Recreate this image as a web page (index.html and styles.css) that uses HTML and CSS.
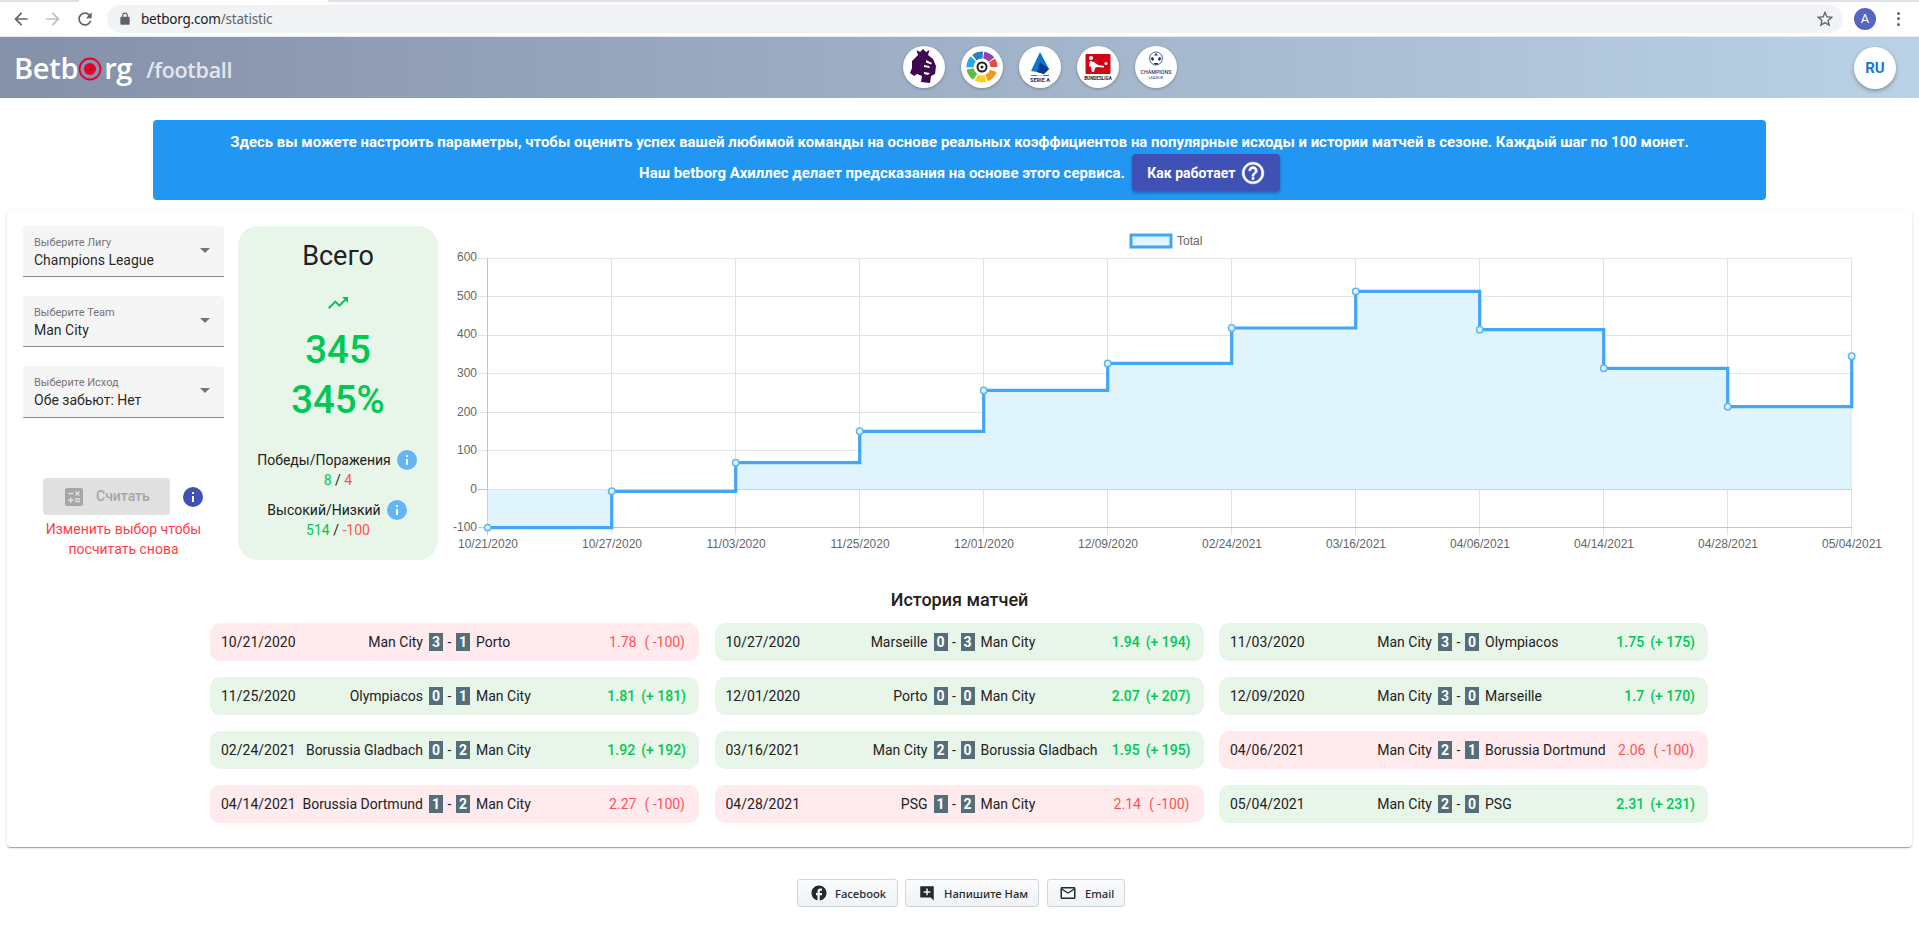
FILE: index.html
```html
<!DOCTYPE html>
<html lang="ru">
<head>
<meta charset="utf-8">
<title>Betborg statistic</title>
<link rel="stylesheet" href="styles.css">
</head>
<body>
<div class="tabstrip"><div class="tab"></div></div>
<div class="toolbar">
  <svg class="tool dark" viewBox="0 0 24 24"><path d="M20 11H7.83l5.59-5.59L12 4l-8 8 8 8 1.41-1.41L7.83 13H20v-2z"/></svg>
  <svg class="tool faint" viewBox="0 0 24 24"><path d="M4 11h12.17l-5.59-5.59L12 4l8 8-8 8-1.41-1.41L16.17 13H4v-2z"/></svg>
  <svg class="tool dark" viewBox="0 0 24 24"><path d="M17.65 6.35C16.2 4.9 14.21 4 12 4c-4.42 0-7.99 3.58-7.99 8s3.57 8 7.99 8c3.73 0 6.84-2.55 7.73-6h-2.08c-.82 2.33-3.04 4-5.65 4-3.31 0-6-2.69-6-6s2.69-6 6-6c1.66 0 3.14.69 4.22 1.78L13 11h7V4l-2.35 2.35z"/></svg>
  <div class="urlbar">
    <svg class="lock" viewBox="0 0 24 24"><path d="M18 8h-1V6c0-2.76-2.24-5-5-5S7 3.24 7 6v2H6c-1.1 0-2 .9-2 2v10c0 1.1.9 2 2 2h12c1.1 0 2-.9 2-2V10c0-1.1-.9-2-2-2zm-2.900 0H8.900V6c0-1.710 1.390-3.100 3.100-3.100 1.710 0 3.100 1.390 3.100 3.100v2z"/></svg>
    <span class="url">betborg.com<span class="url-path">/statistic</span></span>
    <svg class="star" viewBox="0 0 24 24"><path d="M22 9.240l-7.190-.62L12 2 9.190 8.630 2 9.240l5.460 4.730L5.820 21 12 17.270 18.180 21l-1.630-7.030L22 9.240zM12 15.400l-3.760 2.270 1-4.280-3.320-2.880 4.380-.38L12 6.100l1.710 4.040 4.380.38-3.320 2.880 1 4.280L12 15.400z"/></svg>
  </div>
  <div class="avatar">A</div>
  <div class="kebab"><i></i><i></i><i></i></div>
</div>

<header class="site-header">
  <div class="brand">
    <span class="logo">Betb<svg class="logo-o" viewBox="0 0 24 24"><circle cx="12" cy="12" r="10.500" fill="none" stroke="#e4002b" stroke-width="1.800"/><circle cx="12" cy="12" r="6" fill="#e4002b"/></svg>rg</span>
    <span class="section">/football</span>
  </div>
  <nav class="leagues">
    <a class="league"><svg viewBox="0 0 42 42"><path fill="#3d0a4f" d="M15 9L13.500 4l3.500 2 3-3 3 3 3.500-2L25 9l5 4 3 7-1 8-4 2-1 7-9-1 1-6-5-2-3 2-4-3 2-5V15z"/><path fill="#fff" d="M23 14l6 3-1 1.500-5-2zM21 19l5 1 1 2-6-1zM21 26l6 1-2 2-4-1z"/></svg></a>
    <a class="league"><svg viewBox="0 0 42 42"><g fill="none" stroke-width="7"><circle cx="21" cy="21" r="12" stroke="#f39a1c" stroke-dasharray="10 65.400" stroke-dashoffset="-4"/><circle cx="21" cy="21" r="12" stroke="#f6d21e" stroke-dasharray="9.500 65.900" stroke-dashoffset="-15"/><circle cx="21" cy="21" r="12" stroke="#63b947" stroke-dasharray="9.500 65.900" stroke-dashoffset="-26"/><circle cx="21" cy="21" r="12" stroke="#29abe2" stroke-dasharray="9.500 65.900" stroke-dashoffset="-37"/><circle cx="21" cy="21" r="12" stroke="#2d7fc1" stroke-dasharray="9 66.400" stroke-dashoffset="-48"/><circle cx="21" cy="21" r="12" stroke="#8e44ad" stroke-dasharray="9 66.400" stroke-dashoffset="-58"/><circle cx="21" cy="21" r="12" stroke="#e84a3b" stroke-dasharray="7 68.400" stroke-dashoffset="-68"/></g><circle cx="21" cy="21" r="5.500" fill="#222"/><circle cx="21" cy="21" r="3.500" fill="#fff"/><circle cx="21" cy="21" r="1.500" fill="#222"/></svg></a>
    <a class="league"><svg viewBox="0 0 42 42"><path fill="#0b78d0" d="M21 6l9 17-5 5-7-2-6-1z"/><path fill="#0a3f8f" d="M21 16l9 7-5 5-7-2z"/><rect x="12" y="29" width="6" height="1" fill="#2e9e5b"/><rect x="18" y="29" width="6" height="1" fill="#ddd"/><rect x="24" y="29" width="6" height="1" fill="#e53935"/><text class="logo-text" x="21" y="36" font-size="5.500" font-weight="700" fill="#17305f">SERIE A</text></svg></a>
    <a class="league"><svg viewBox="0 0 42 42"><rect x="8.500" y="8" width="25" height="20" rx="1" fill="#d20515"/><path fill="#fff" d="M14 10a2 2 0 1 1 0 4 2 2 0 0 1 0-4zM13 15l4 1 4 3 6 1v1.500l-7-.5-2 1-1 4h-2l-1-5-2-1z"/><circle cx="29" cy="17.500" r="1.500" fill="#fff"/><text class="logo-text" x="21" y="33.500" font-size="4.600" font-weight="700" fill="#222">BUNDESLIGA</text></svg></a>
    <a class="league"><svg viewBox="0 0 42 42"><circle cx="21" cy="12.500" r="6.500" fill="#fff" stroke="#1f3a7a" stroke-width=".8"/><path fill="#1f3a7a" d="M21 7l2 2.500h-4zM15.500 12l2.500-1 1.200 2.500-2 1.500zM26.500 12L24 11l-1.200 2.500 2 1.500zM18.500 17h5l-1 1.500h-3z"/><text class="logo-text" x="21" y="27.500" font-size="5.300" font-weight="500" fill="#1f3a7a">CHAMPIONS</text><text class="logo-text" x="21" y="33" font-size="4" fill="#1f3a7a">LEAGUE</text></svg></a>
  </nav>
  <a class="lang">RU</a>
</header>

<section class="notice">
  <p class="notice-line">Здесь вы можете настроить параметры, чтобы оценить успех вашей любимой команды на основе реальных коэффициентов на популярные исходы и истории матчей в сезоне. Каждый шаг по 100 монет.</p>
  <div class="notice-row">
    <span>Наш betborg Ахиллес делает предсказания на основе этого сервиса.</span>
    <button class="how">Как работает <svg class="how-icon" viewBox="0 0 24 24"><path d="M11 18h2v-2h-2v2zm1-16C6.480 2 2 6.480 2 12s4.480 10 10 10 10-4.480 10-10S17.520 2 12 2zm0 18c-4.410 0-8-3.590-8-8s3.590-8 8-8 8 3.590 8 8-3.590 8-8 8zm0-14c-2.210 0-4 1.790-4 4h2c0-1.100.9-2 2-2s2 .9 2 2c0 2-3 1.750-3 5h2c0-2.250 3-2.500 3-5 0-2.210-1.790-4-4-4z"/></svg></button>
  </div>
</section>

<main class="card">
  <div class="top">
    <div class="controls">
      <div class="select"><label>Выберите Лигу</label><div class="value">Champions League</div><i class="caret"></i></div>
      <div class="select"><label>Выберите Team</label><div class="value">Man City</div><i class="caret"></i></div>
      <div class="select tall"><label>Выберите Исход</label><div class="value">Обе забьют: Нет</div><i class="caret"></i></div>
      <div class="calc-row">
        <button class="calc" disabled><svg class="calc-icon" viewBox="0 0 24 24"><path d="M19 3H5c-1.100 0-2 .9-2 2v14c0 1.100.9 2 2 2h14c1.100 0 2-.9 2-2V5c0-1.100-.9-2-2-2zm-5.970 4.060L14.090 6l1.410 1.410L16.910 6l1.060 1.060-1.410 1.410 1.410 1.410-1.060 1.060-1.410-1.400-1.410 1.410-1.060-1.060 1.410-1.410-1.410-1.420zm-6.780.66h5v1.500h-5v-1.500zM11.500 16h-2v2H8v-2H6v-1.500h2v-2h1.500v2h2V16zm6.500 1.250h-5v-1.500h5v1.500zm0-2.500h-5v-1.500h5v1.500z"/></svg><span class="calc-label">Считать</span></button>
        <svg class="info indigo" viewBox="0 0 24 24"><circle cx="12" cy="12" r="10"/><path d="M11 11h2v6h-2zM11 7h2v2h-2z"/></svg>
      </div>
      <p class="calc-note">Изменить выбор чтобы<br>посчитать снова</p>
    </div>

    <aside class="stats">
      <h2 class="stats-title">Всего</h2>
      <svg class="trend" viewBox="0 0 24 24"><path d="M16 6l2.290 2.290-4.880 4.880-4-4L2 16.590 3.410 18l6-6 4 4 6.300-6.290L22 12V6z"/></svg>
      <div class="big first">345</div>
      <div class="big">345%</div>
      <div class="stat-label first-label">Победы/Поражения <svg class="info sky" viewBox="0 0 24 24"><circle cx="12" cy="12" r="10"/><path d="M11 11h2v6h-2zM11 7h2v2h-2z"/></svg></div>
      <div class="stat-value"><span class="pos">8</span> / <span class="neg">4</span></div>
      <div class="stat-label second-label">Высокий/Низкий <svg class="info sky" viewBox="0 0 24 24"><circle cx="12" cy="12" r="10"/><path d="M11 11h2v6h-2zM11 7h2v2h-2z"/></svg></div>
      <div class="stat-value"><span class="pos">514</span> / <span class="neg">-100</span></div>
    </aside>

    <svg class="chart" viewBox="450 226 1450 340">
      <rect class="legend-box" x="1131" y="235" width="40" height="12"/>
      <text class="tick" x="1177" y="245">Total</text>
      <path class="grid" d="M478 258.500H1852M478 296.500H1852M478 335.500H1852M478 373.500H1852M478 412.500H1852M478 450.500H1852"/>
      <path class="grid" d="M611.500 258V535M735.500 258V535M859.500 258V535M983.500 258V535M1107.500 258V535M1231.500 258V535M1355.500 258V535M1479.500 258V535M1603.500 258V535M1727.500 258V535M1851.500 258V535"/>
      <path class="axis" d="M478 489.500H1852M478 527.500H1852M487.500 258V535"/>
      <path class="area" d="M487.700 489.300V527.600H611.700V491.300H735.700V462.700H859.700V431.300H983.700V390.400H1107.700V363.400H1231.700V328H1355.700V291.400H1479.700V329.700H1603.700V368.300H1727.700V406.700H1851.700V489.300Z"/>
      <path class="line" d="M487.700 527.600H611.700V491.300H735.700V462.700H859.700V431.300H983.700V390.400H1107.700V363.400H1231.700V328H1355.700V291.400H1479.700V329.700H1603.700V368.300H1727.700V406.700H1851.700V356.300"/>
      <g class="dots">
        <circle cx="487.700" cy="527.600" r="3.200"/><circle cx="611.700" cy="491.300" r="3.200"/><circle cx="735.700" cy="462.700" r="3.200"/><circle cx="859.700" cy="431.300" r="3.200"/><circle cx="983.700" cy="390.400" r="3.200"/><circle cx="1107.700" cy="363.400" r="3.200"/><circle cx="1231.700" cy="328" r="3.200"/><circle cx="1355.700" cy="291.400" r="3.200"/><circle cx="1479.700" cy="329.700" r="3.200"/><circle cx="1603.700" cy="368.300" r="3.200"/><circle cx="1727.700" cy="406.700" r="3.200"/><circle cx="1851.700" cy="356.300" r="3.200"/>
      </g>
      <g class="tick y">
        <text x="477" y="261">600</text><text x="477" y="300">500</text><text x="477" y="338">400</text><text x="477" y="377">300</text><text x="477" y="416">200</text><text x="477" y="454">100</text><text x="477" y="493">0</text><text x="477" y="531">-100</text>
      </g>
      <g class="tick x">
        <text x="488" y="548">10/21/2020</text><text x="612" y="548">10/27/2020</text><text x="736" y="548">11/03/2020</text><text x="860" y="548">11/25/2020</text><text x="984" y="548">12/01/2020</text><text x="1108" y="548">12/09/2020</text><text x="1232" y="548">02/24/2021</text><text x="1356" y="548">03/16/2021</text><text x="1480" y="548">04/06/2021</text><text x="1604" y="548">04/14/2021</text><text x="1728" y="548">04/28/2021</text><text x="1852" y="548">05/04/2021</text>
      </g>
    </svg>
  </div>

  <h3 class="history-title">История матчей</h3>
  <div class="matches">
    <div class="match lost"><span class="date">10/21/2020</span><span class="home">Man City</span><b class="score">3</b><span class="dash">-</span><b class="score">1</b><span class="away">Porto</span><span class="odds"><span>1.78</span><span class="ret">( -100)</span></span></div>
    <div class="match won"><span class="date">10/27/2020</span><span class="home">Marseille</span><b class="score">0</b><span class="dash">-</span><b class="score">3</b><span class="away">Man City</span><span class="odds"><span>1.94</span><span class="ret">(+ 194)</span></span></div>
    <div class="match won"><span class="date">11/03/2020</span><span class="home">Man City</span><b class="score">3</b><span class="dash">-</span><b class="score">0</b><span class="away">Olympiacos</span><span class="odds"><span>1.75</span><span class="ret">(+ 175)</span></span></div>
    <div class="match won"><span class="date">11/25/2020</span><span class="home">Olympiacos</span><b class="score">0</b><span class="dash">-</span><b class="score">1</b><span class="away">Man City</span><span class="odds"><span>1.81</span><span class="ret">(+ 181)</span></span></div>
    <div class="match won"><span class="date">12/01/2020</span><span class="home">Porto</span><b class="score">0</b><span class="dash">-</span><b class="score">0</b><span class="away">Man City</span><span class="odds"><span>2.07</span><span class="ret">(+ 207)</span></span></div>
    <div class="match won"><span class="date">12/09/2020</span><span class="home">Man City</span><b class="score">3</b><span class="dash">-</span><b class="score">0</b><span class="away">Marseille</span><span class="odds"><span>1.7</span><span class="ret">(+ 170)</span></span></div>
    <div class="match won"><span class="date">02/24/2021</span><span class="home">Borussia Gladbach</span><b class="score">0</b><span class="dash">-</span><b class="score">2</b><span class="away">Man City</span><span class="odds"><span>1.92</span><span class="ret">(+ 192)</span></span></div>
    <div class="match won"><span class="date">03/16/2021</span><span class="home">Man City</span><b class="score">2</b><span class="dash">-</span><b class="score">0</b><span class="away">Borussia Gladbach</span><span class="odds"><span>1.95</span><span class="ret">(+ 195)</span></span></div>
    <div class="match lost"><span class="date">04/06/2021</span><span class="home">Man City</span><b class="score">2</b><span class="dash">-</span><b class="score">1</b><span class="away">Borussia Dortmund</span><span class="odds"><span>2.06</span><span class="ret">( -100)</span></span></div>
    <div class="match lost"><span class="date">04/14/2021</span><span class="home">Borussia Dortmund</span><b class="score">1</b><span class="dash">-</span><b class="score">2</b><span class="away">Man City</span><span class="odds"><span>2.27</span><span class="ret">( -100)</span></span></div>
    <div class="match lost"><span class="date">04/28/2021</span><span class="home">PSG</span><b class="score">1</b><span class="dash">-</span><b class="score">2</b><span class="away">Man City</span><span class="odds"><span>2.14</span><span class="ret">( -100)</span></span></div>
    <div class="match won"><span class="date">05/04/2021</span><span class="home">Man City</span><b class="score">2</b><span class="dash">-</span><b class="score">0</b><span class="away">PSG</span><span class="odds"><span>2.31</span><span class="ret">(+ 231)</span></span></div>
  </div>
</main>

<footer class="links">
  <a class="link fb"><svg viewBox="0 0 24 24"><path d="M22 12c0-5.520-4.480-10-10-10S2 6.480 2 12c0 4.840 3.440 8.870 8 9.800V15H8v-3h2V9.500C10 7.570 11.570 6 13.500 6H16v3h-2c-.55 0-1 .45-1 1v2h3v3h-3v6.950c5.050-.5 9-4.760 9-9.950z"/></svg>Facebook</a>
  <a class="link msg"><svg viewBox="0 0 24 24"><path fill-rule="evenodd" d="M3 3h18v19l-4-4H3zM11 6v3.500H7.500v2H11V15h2v-3.500h3.500v-2H13V6z"/></svg>Напишите Нам</a>
  <a class="link mail"><svg viewBox="0 0 24 24"><path d="M20 4H4c-1.100 0-1.990.9-1.990 2L2 18c0 1.100.9 2 2 2h16c1.100 0 2-.9 2-2V6c0-1.100-.9-2-2-2zm0 14H4V8l8 5 8-5v10zm-8-7L4 6h16l-8 5z"/></svg>Email</a>
</footer>
</body>
</html>
```

FILE: styles.css
```css
* { box-sizing: border-box; }
html, body { margin: 0; padding: 0; }
body {
  width: 1919px;
  height: 925px;
  overflow: hidden;
  background: #fff;
  font-family: Roboto, "Liberation Sans", sans-serif;
  color: #212121;
}

/* browser chrome */
.tabstrip { height: 2px; background: #dee1e6; }
.tab { width: 249px; height: 2px; margin-left: 79px; background: #fff; }
.toolbar {
  height: 35px;
  display: flex;
  align-items: center;
  background: #fff;
  border-bottom: 1px solid #e8eaed;
  padding: 0 0 1px 11px;
}
.tool { width: 20px; height: 20px; margin-right: 12px; flex: none; }
.tool.dark { fill: #5f6368; }
.tool.faint { fill: #bdc1c6; }
.urlbar {
  width: 1736px;
  height: 28px;
  border-radius: 14px;
  background: #f1f3f4;
  display: flex;
  align-items: center;
  padding: 0 8px 0 11px;
}
.lock { width: 14px; height: 14px; fill: #5f6368; margin-right: 9px; flex: none; }
.url { font: 13.500px "Noto Sans", sans-serif; color: #202124; letter-spacing: -0.2px; }
.url-path { color: #5f6368; }
.star { width: 20px; height: 20px; fill: #5f6368; margin-left: auto; }
.avatar {
  width: 22px;
  height: 22px;
  margin-left: 11px;
  border-radius: 50%;
  background: #5565c2;
  color: #fff;
  font-size: 13px;
  line-height: 22px;
  text-align: center;
}
.kebab { display: flex; flex-direction: column; gap: 2.500px; margin-left: 21px; }
.kebab i { width: 3px; height: 3px; border-radius: 50%; background: #5f6368; }

/* site header */
.site-header {
  height: 61px;
  display: flex;
  align-items: center;
  position: relative;
  background: linear-gradient(90deg, #8590a9 0%, #bad2e6 100%);
  padding: 0 23px 0 14px;
}
.brand { display: flex; align-items: center; }
.logo {
  display: flex;
  align-items: center;
  font: 600 29px/1 "Open Sans", sans-serif;
  color: #fff;
  letter-spacing: -0.3px;
}
.logo-o { width: 24px; height: 24px; margin: 3px 2px 0 0; }
.section {
  margin-left: 14px;
  padding-top: 4px;
  font: 600 21.500px/1 "Open Sans", sans-serif;
  color: #e4e6ea;
  letter-spacing: -0.3px;
}
.leagues {
  display: flex;
  gap: 16px;
  position: absolute;
  left: 903px;
  top: 9px;
}
.league {
  width: 42px;
  height: 42px;
  border-radius: 50%;
  background: #fff;
  box-shadow: 0 1px 3px rgba(0,0,0,.25);
  display: block;
}
.league svg { display: block; width: 42px; height: 42px; }
.logo-text { font-family: Roboto, sans-serif; text-anchor: middle; }
.lang {
  margin-left: auto;
  width: 42px;
  height: 42px;
  border-radius: 50%;
  background: #fff;
  box-shadow: 0 2px 4px rgba(0,0,0,.3);
  color: #1976d2;
  font-size: 15px;
  font-weight: 700;
  line-height: 42px;
  text-align: center;
}

/* notice */
.notice {
  width: 1613px;
  height: 80px;
  margin: 22px 0 10px 153px;
  padding-top: 12px;
  border-radius: 4px;
  background: #2196f3;
  color: #fff;
  font-size: 14.950px;
  font-weight: 700;
  text-align: center;
}
.notice-line { margin: 0; line-height: 20px; }
.notice-row {
  display: flex;
  justify-content: center;
  align-items: center;
  gap: 7px;
  margin-top: 2px;
}
.how {
  width: 148px;
  height: 37px;
  border: 0;
  border-radius: 4px;
  background: #3f51b5;
  color: #fff;
  font: 700 14px Roboto, sans-serif;
  box-shadow: 0 2px 3px rgba(0,0,0,.3);
  display: flex;
  align-items: center;
  justify-content: center;
  gap: 5px;
  padding: 0 0 0 2px;
}
.how-icon { width: 26px; height: 26px; fill: #fff; stroke: #fff; stroke-width: .5; }

/* main card */
.card {
  width: 1905px;
  height: 637px;
  margin-left: 7px;
  padding: 16px;
  border-radius: 4px;
  background: #fff;
  box-shadow: 0 2px 1px -1px rgba(0,0,0,.2), 0 1px 1px rgba(0,0,0,.14), 0 1px 3px rgba(0,0,0,.12);
}
.top { display: flex; align-items: flex-start; }
.controls { width: 201px; flex: none; }
.select {
  position: relative;
  height: 51px;
  margin-bottom: 19px;
  padding: 11px 0 0 11px;
  background: #f5f5f5;
  border-bottom: 1px solid #8c8c8c;
  border-radius: 4px 4px 0 0;
}
.select.tall { height: 52px; margin-bottom: 0; }
.select label { display: block; font-size: 11px; line-height: 12px; color: #757575; }
.value { font-size: 14px; line-height: 20px; margin-top: 1px; color: rgba(0,0,0,.87); }
.caret {
  position: absolute;
  right: 14px;
  top: 22px;
  width: 0;
  height: 0;
  border: 5px solid transparent;
  border-top-color: #757575;
  border-bottom: 0;
}
.calc-row { display: flex; align-items: center; gap: 11px; padding-left: 20px; margin-top: 60px; }
.calc {
  width: 127px;
  height: 37px;
  border: 0;
  border-radius: 4px;
  background: #e0e0e0;
  color: #a6a6a6;
  font: 500 14px Roboto, sans-serif;
  display: flex;
  align-items: center;
  gap: 10px;
  padding: 0 0 0 19px;
}
.calc-label { padding-bottom: 2px; }
.calc-icon { width: 24px; height: 24px; fill: #a6a6a6; }
.info { width: 24px; height: 24px; flex: none; }
.info path { fill: #fff; }
.info.indigo circle { fill: #3f51b5; }
.info.sky circle { fill: #64b5f6; }
.calc-note {
  margin: 4px 0 0;
  color: #ff3d47;
  font-size: 14px;
  line-height: 20px;
  text-align: center;
}

/* stats */
.stats {
  width: 200px;
  height: 334px;
  margin-left: 14px;
  flex: none;
  border-radius: 20px;
  background: #e8f5e9;
  text-align: center;
  padding-top: 12px;
}
.stats-title { margin: 0; font-size: 27px; font-weight: 400; line-height: 36px; color: #212121; }
.trend { display: block; width: 24px; height: 24px; margin: 17px auto 0; fill: #00c853; }
.big { font-size: 38.400px; font-weight: 500; line-height: 50px; color: #00c853; }
.big.first { margin-top: 10px; }
.stat-label {
  display: flex;
  align-items: center;
  justify-content: center;
  height: 20px;
  font-size: 14px;
}
.stat-label .info { margin-left: 4px; }
.first-label { margin-top: 25px; }
.second-label { margin-top: 10px; }
.stat-value { font-size: 14px; line-height: 20px; }
.pos { color: #00c853; }
.neg { color: #ff5252; }

/* chart */
.chart { width: 1450px; height: 340px; margin-left: 12px; flex: none; display: block; }
.legend-box { fill: #e1f5fe; stroke: #42a5f5; stroke-width: 3; }
.grid { fill: none; stroke: #e2e2e2; stroke-width: 1; }
.axis { fill: none; stroke: #c4c4c4; stroke-width: 1; }
.area { fill: #e0f4fe; }
.line { fill: none; stroke: #42a5f5; stroke-width: 3.200; }
.dots circle { fill: #e1f5fe; stroke: #64b5f6; stroke-width: 1.500; }
.tick { font: 12px "Liberation Sans", sans-serif; fill: #666; }
.tick.y { text-anchor: end; }
.tick.x { text-anchor: middle; }

/* history */
.history-title {
  margin: 23px 0 12px;
  font-size: 18px;
  font-weight: 500;
  line-height: 22px;
  text-align: center;
  color: #212121;
}
.matches {
  width: 1499px;
  margin-left: 187px;
  display: grid;
  grid-template-columns: repeat(3, 489px);
  gap: 16px 15.500px;
}
.match {
  height: 38px;
  display: flex;
  align-items: center;
  padding: 0 13px 0 11px;
  border-radius: 10px;
  font-size: 14px;
  white-space: nowrap;
}
.match.lost { background: #ffebee; }
.match.won { background: #e8f5e9; }
.date { width: 74px; flex: none; }
.home { width: 128px; flex: none; text-align: right; margin-right: 6px; }
.score {
  width: 14px;
  height: 18px;
  flex: none;
  background: #546e7a;
  color: #fff;
  font-weight: 700;
  line-height: 18px;
  text-align: center;
}
.dash { width: 13px; flex: none; text-align: center; }
.away { margin-left: 6px; }
.odds { margin-left: auto; }
.ret { margin-left: 6px; }
.won .odds { color: #00c853; font-weight: 500; }
.lost .odds { color: #ff5252; padding-right: 1px; }
.lost .ret { margin-left: 8px; }

/* footer */
.links { display: flex; gap: 7px; margin: 32px 0 0 797px; }
.link {
  height: 28px;
  display: flex;
  align-items: center;
  border: 1px solid #d1d5da;
  border-radius: 3px;
  background: linear-gradient(180deg, #fafbfc, #eff3f6);
  color: #24292e;
  font: 500 11.200px "Noto Sans", sans-serif;
  white-space: nowrap;
}
.link svg { width: 18px; height: 18px; fill: #24292e; flex: none; }
.fb { width: 101px; padding-left: 12px; gap: 7px; }
.msg { width: 134px; padding-left: 12px; gap: 8px; }
.mail { width: 78px; padding-left: 11px; gap: 8px; margin-left: 1px; }
```
